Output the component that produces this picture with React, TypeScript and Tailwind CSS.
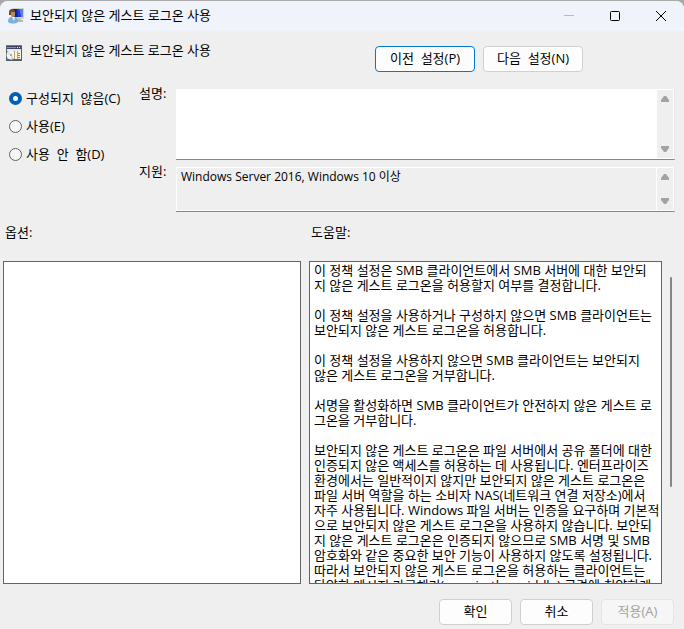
import { useState } from 'react';

const HELP_TEXT = `이 정책 설정은 SMB 클라이언트에서 SMB 서버에 대한 보안되
지 않은 게스트 로그온을 허용할지 여부를 결정합니다.

이 정책 설정을 사용하거나 구성하지 않으면 SMB 클라이언트는
보안되지 않은 게스트 로그온을 허용합니다.

이 정책 설정을 사용하지 않으면 SMB 클라이언트는 보안되지
않은 게스트 로그온을 거부합니다.

서명을 활성화하면 SMB 클라이언트가 안전하지 않은 게스트 로
그온을 거부합니다.

보안되지 않은 게스트 로그온은 파일 서버에서 공유 폴더에 대한
인증되지 않은 액세스를 허용하는 데 사용됩니다. 엔터프라이즈
환경에서는 일반적이지 않지만 보안되지 않은 게스트 로그온은
파일 서버 역할을 하는 소비자 NAS(네트워크 연결 저장소)에서
자주 사용됩니다. Windows 파일 서버는 인증을 요구하며 기본적
으로 보안되지 않은 게스트 로그온을 사용하지 않습니다. 보안되
지 않은 게스트 로그온은 인증되지 않으므로 SMB 서명 및 SMB
암호화와 같은 중요한 보안 기능이 사용하지 않도록 설정됩니다.
따라서 보안되지 않은 게스트 로그온을 허용하는 클라이언트는
다양한 메시지 가로채기(man-in-the-middle) 공격에 취약하게
됩니다.`;

const STATES = [
  { id: 'notConfigured', label: '구성되지  않음(C)' },
  { id: 'enabled', label: '사용(E)' },
  { id: 'disabled', label: '사용  안  함(D)' },
];

function PolicyUserIcon() {
  return (
    <svg width="16" height="16" viewBox="0 0 16 16" aria-hidden="true">
      <path d="M4 0h12v11H4z" fill="#d5d2c6" />
      <path d="M5 1h10v8H5z" fill="#0a1fb4" />
      <path d="M11 1h4v8h-2z" fill="#5c7dea" />
      <path d="M9 1h2l2 8h-3z" fill="#2340d6" />
      <path d="M9 11h4v1H9zM8 12h7v2H8z" fill="#b9b6aa" />
      <path d="M1 4c0-4 6-4 6 0v3H1z" fill="#6e4a2b" />
      <path d="M3 4h4v3c0 3-4 3-4 0z" fill="#b98a5c" />
      <path d="M0 14c0-3 1-5 4-5h2c3 0 4 2 4 5-3 2-7 2-10 0z" fill="#79b0dc" />
      <path d="M4 9h3l-1 4z" fill="#f2f7fb" />
    </svg>
  );
}

function SettingIcon() {
  return (
    <svg width="16" height="16" viewBox="0 0 16 16" aria-hidden="true">
      <path d="M0 0h16v16H0z" fill="#55606a" />
      <path d="M0 0h16v1H0z" fill="#4f8a8a" />
      <path d="M1 1h14v3H1z" fill="#3c4468" />
      <path d="M1 2h9v1H1z" fill="#8390a8" />
      <path d="M11 2h1v1h-1zM13 2h1v1h-1z" fill="#e6eef0" />
      <path d="M1 4h14v2H1z" fill="#e8e8e4" />
      <path d="M1 6h14v8H1z" fill="#a9a6a2" />
      <circle cx="5" cy="10" r="4.500" fill="#f5f5f5" />
      <path d="M5 10L1 9a4.500 4.500 0 0 1 2-2.500z" fill="#cfe8d6" />
      <path d="M5 10l3 3.500a4.500 4.500 0 0 1-3 1z" fill="#ddd0e6" />
      <circle cx="5" cy="10" r="1" fill="#8b949a" />
      <path d="M8 6h7v8H8z" fill="#fdf6dc" />
      <path d="M8 6h1v8H8zM11 6h1v8h-1z" fill="#b5a07c" />
      <path d="M12 8.500h2M12 10.500h2M12 12.500h2" stroke="#8e8468" />
    </svg>
  );
}

function ScrollArrows() {
  return (
    <div className="flex w-4 flex-col items-center justify-between bg-[#efefef] py-1.5">
      <svg width="8" height="6" viewBox="0 0 8 6" aria-hidden="true">
        <path d="M3 0h2l3 4v2H0V4z" fill="#a3a3a3" />
      </svg>
      <svg width="8" height="6" viewBox="0 0 8 6" aria-hidden="true">
        <path d="M0 0h8v2L5 6H3L0 2z" fill="#a3a3a3" />
      </svg>
    </div>
  );
}

export default function App() {
  const [state, setState] = useState('notConfigured');
  const [comment, setComment] = useState('');

  return (
    <main className="flex min-h-screen flex-col bg-[#a9a9a9] pt-px font-['Open_Sans','Noto_Sans_CJK_KR',sans-serif] text-[13px] leading-[15px] text-black">
      <div className="flex flex-1 flex-col rounded-t-lg bg-[#efefef]">
        <header className="flex h-[30px] items-center rounded-t-lg bg-[#f0f3f9] pl-2">
          <PolicyUserIcon />
          <h1 className="ml-1.5 flex-1 pb-0.5">보안되지 않은 게스트 로그온 사용</h1>
          <button aria-label="최소화" disabled className="flex h-full w-[46px] items-center justify-center">
            <svg width="10" height="10" viewBox="0 0 10 10">
              <path d="M0 4.500h10" stroke="#b8babd" />
            </svg>
          </button>
          <button aria-label="최대화" className="flex h-full w-[46px] items-center justify-center">
            <svg width="10" height="10" viewBox="0 0 10 10">
              <rect x="0.500" y="0.500" width="9" height="9" rx="1" fill="none" stroke="#000" />
            </svg>
          </button>
          <button aria-label="닫기" className="flex h-full w-[46px] items-center justify-center">
            <svg width="10" height="10" viewBox="0 0 10 10">
              <path d="M0 0l10 10M10 0L0 10" stroke="#000" />
            </svg>
          </button>
        </header>

        {/* Setting name and navigation */}
        <div className="flex items-start pt-3 pl-1.5">
          <div className="flex flex-1 gap-2">
            <div className="pt-0.5">
              <SettingIcon />
            </div>
            <h2>보안되지 않은 게스트 로그온 사용</h2>
          </div>
          <div className="mr-[101px] flex gap-2 pt-[3px]">
            <button className="h-[26px] w-[100px] rounded border border-[#0078d4] bg-[#fdfdfd] pb-0.5 whitespace-pre">이전  설정(P)</button>
            <button className="h-[26px] w-[100px] rounded border border-[#d0d0d0] bg-[#fdfdfd] pb-0.5 whitespace-pre">다음  설정(N)</button>
          </div>
        </div>

        <div className="flex pt-[17px] pr-[9px]">
          <fieldset className="flex w-[139px] flex-col gap-[13px] pt-0.5 pl-[9px]">
            {STATES.map(({ id, label }) => (
              <label key={id} className="flex items-center gap-1 whitespace-pre">
                <input
                  type="radio"
                  name="state"
                  checked={state === id}
                  onChange={() => setState(id)}
                  className="size-[13px] appearance-none rounded-full border border-[#626262] bg-[#f6f6f6] checked:border-4 checked:border-[#005fb8] checked:bg-white"
                />
                {label}
              </label>
            ))}
          </fieldset>

          <div className="flex flex-1 flex-col gap-[7px]">
            <div className="flex">
              <label htmlFor="comment" className="-mt-[3px] w-[37px] shrink-0">설명:</label>
              <div className="flex h-[71px] flex-1 border-r border-b border-r-[#e5e5e5] border-b-[#868686] bg-white p-px">
                <textarea
                  id="comment"
                  value={comment}
                  onChange={(e) => setComment(e.target.value)}
                  className="flex-1 resize-none overflow-hidden px-1 outline-none"
                />
                <ScrollArrows />
              </div>
            </div>
            <div className="flex">
              <label htmlFor="supported" className="-mt-[3px] w-[37px] shrink-0">지원:</label>
              <div className="flex h-[45px] flex-1 gap-px border-r border-b border-r-[#e5e5e5] border-b-[#868686] bg-white p-px">
                <textarea
                  id="supported"
                  readOnly
                  value="Windows Server 2016, Windows 10 이상"
                  className="flex-1 resize-none overflow-hidden bg-[#efefef] px-1 py-px text-xs leading-[15px] outline-none"
                />
                <ScrollArrows />
              </div>
            </div>
          </div>
        </div>

        <div className="flex flex-1 gap-2 pt-[13px] pl-[3px]">
          <section className="flex w-[298px] flex-col gap-[21px]">
            <h3 className="pl-0.5">옵션:</h3>
            <div className="flex-1 border border-[#646464] bg-white" />
          </section>
          <section className="flex flex-1 flex-col gap-[21px]">
            <label htmlFor="help" className="pl-0.5">도움말:</label>
            <div className="flex flex-1">
              <textarea
                id="help"
                readOnly
                value={HELP_TEXT}
                className="flex-1 resize-none overflow-hidden border border-[#646464] bg-white pt-px pl-1 whitespace-pre outline-none"
              />
              <div className="w-[22px] pt-4 pl-2">
                <div className="h-[210px] w-0.5 rounded bg-[#858585]" />
              </div>
            </div>
          </section>
        </div>

        <footer className="flex justify-end gap-2 pt-[15px] pr-2.5 pb-1">
          <button className="h-[26px] w-[73px] rounded border border-[#d0d0d0] bg-[#fdfdfd] pb-0.5">확인</button>
          <button className="h-[26px] w-[73px] rounded border border-[#d0d0d0] bg-[#fdfdfd] pb-0.5">취소</button>
          <button disabled className="h-[26px] w-[73px] rounded border border-[#e5e5e5] bg-[#f6f6f6] pb-0.5 text-[#a0a0a0]">적용(A)</button>
        </footer>
      </div>
    </main>
  );
}
